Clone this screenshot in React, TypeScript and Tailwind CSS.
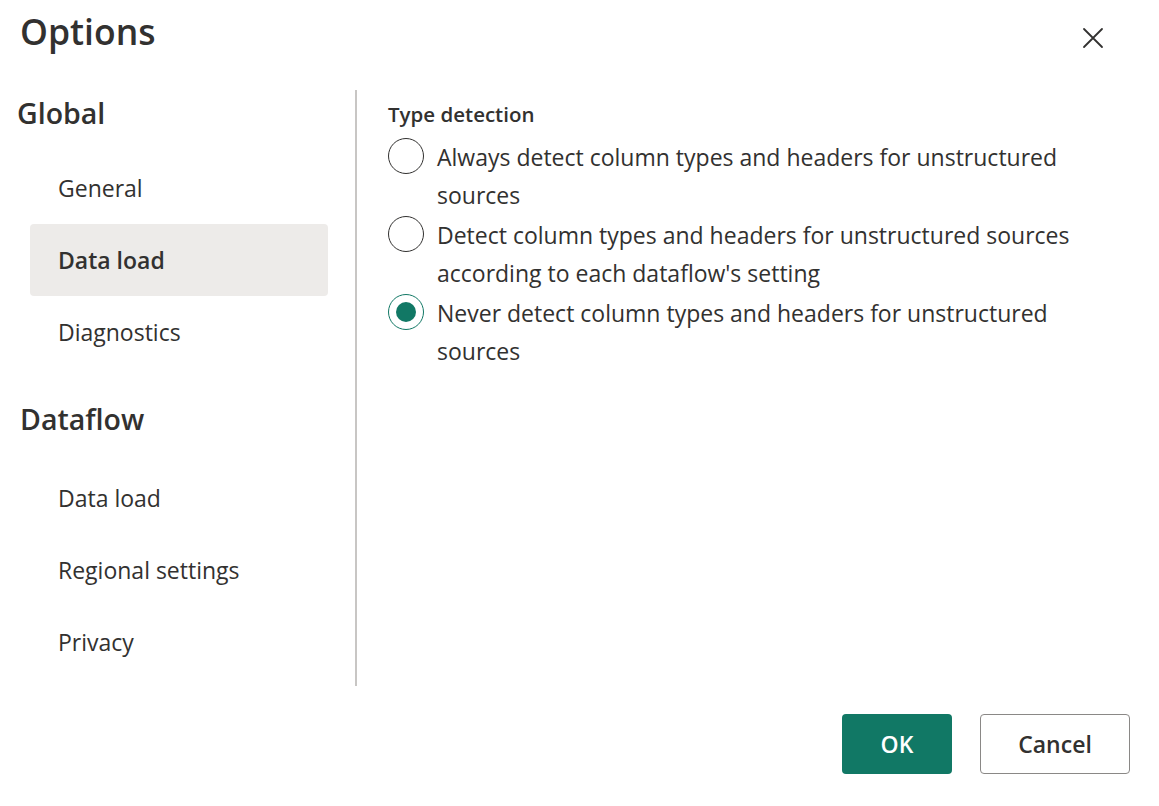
import React from "react";

const font = { fontFamily: '"Open Sans", "Noto Sans", sans-serif' };

function Radio({ checked }: { checked?: boolean }) {
  return (
    <div
      className={`w-[36px] h-[36px] shrink-0 rounded-full border flex items-center justify-center ${
        checked ? "border-[#117865]" : "border-[#323130]"
      }`}
    >
      {checked && <div className="w-[20px] h-[20px] rounded-full bg-[#117865]" />}
    </div>
  );
}

function Option({ checked, lines }: { checked?: boolean; lines: string[] }) {
  return (
    <div className="flex items-start gap-[13px]">
      <Radio checked={checked} />
      <div className="text-[23px] leading-[38px] text-[#323130]">
        {lines.map((l) => (
          <div key={l}>{l}</div>
        ))}
      </div>
    </div>
  );
}

function NavItem({ label, selected }: { label: string; selected?: boolean }) {
  return (
    <div
      className={`h-[72px] w-[298px] ml-[30px] pl-[28px] flex items-center rounded-[4px] text-[23px] text-[#323130] ${
        selected ? "bg-[#edebe9] font-semibold" : ""
      }`}
    >
      {label}
    </div>
  );
}

export default function App() {
  return (
    <div className="w-[1159px] h-[806px] bg-white flex flex-col text-[#323130]" style={font}>
      <div className="h-[90px] flex items-start justify-between pl-[20px] pr-[55px]">
        <div className="text-[35.5px] font-semibold leading-[46px] pt-[8px]">Options</div>
        <svg width="22" height="22" viewBox="0 0 22 22" className="mt-[27px]">
          <path d="M2 2 L20 20 M20 2 L2 20" stroke="#323130" strokeWidth="1.8" strokeLinecap="round" />
        </svg>
      </div>
      <div className="flex h-[596px]">
        <div className="w-[357px] border-r-2 border-[#c8c6c4] flex flex-col">
          <div className="h-[46px] pl-[17px] text-[28.5px] font-semibold leading-[46px]">Global</div>
          <div className="h-[16px]" />
          <NavItem label="General" />
          <NavItem label="Data load" selected />
          <NavItem label="Diagnostics" />
          <div className="h-[28px]" />
          <div className="h-[46px] pl-[20px] text-[28.5px] font-semibold leading-[46px]">Dataflow</div>
          <div className="h-[20px]" />
          <NavItem label="Data load" />
          <NavItem label="Regional settings" />
          <NavItem label="Privacy" />
        </div>
        <div className="flex-1 pl-[31px] pt-[10px] flex flex-col">
          <div className="text-[20.5px] font-semibold leading-[28px] mb-[10px]">Type detection</div>
          <div className="flex flex-col gap-[2px]">
            <Option lines={["Always detect column types and headers for unstructured", "sources"]} />
            <Option lines={["Detect column types and headers for unstructured sources", "according to each dataflow's setting"]} />
            <Option checked lines={["Never detect column types and headers for unstructured", "sources"]} />
          </div>
        </div>
      </div>
      <div className="flex justify-end gap-[28px] pr-[29px] pt-[28px]">
        <button className="w-[110px] h-[60px] rounded-[4px] bg-[#117865] text-white text-[23px] font-semibold pt-[1px]">OK</button>
        <button className="w-[150px] h-[60px] rounded-[4px] border border-[#8a8886] bg-white text-[#323130] text-[23px] font-semibold pt-[1px]">
          Cancel
        </button>
      </div>
    </div>
  );
}
